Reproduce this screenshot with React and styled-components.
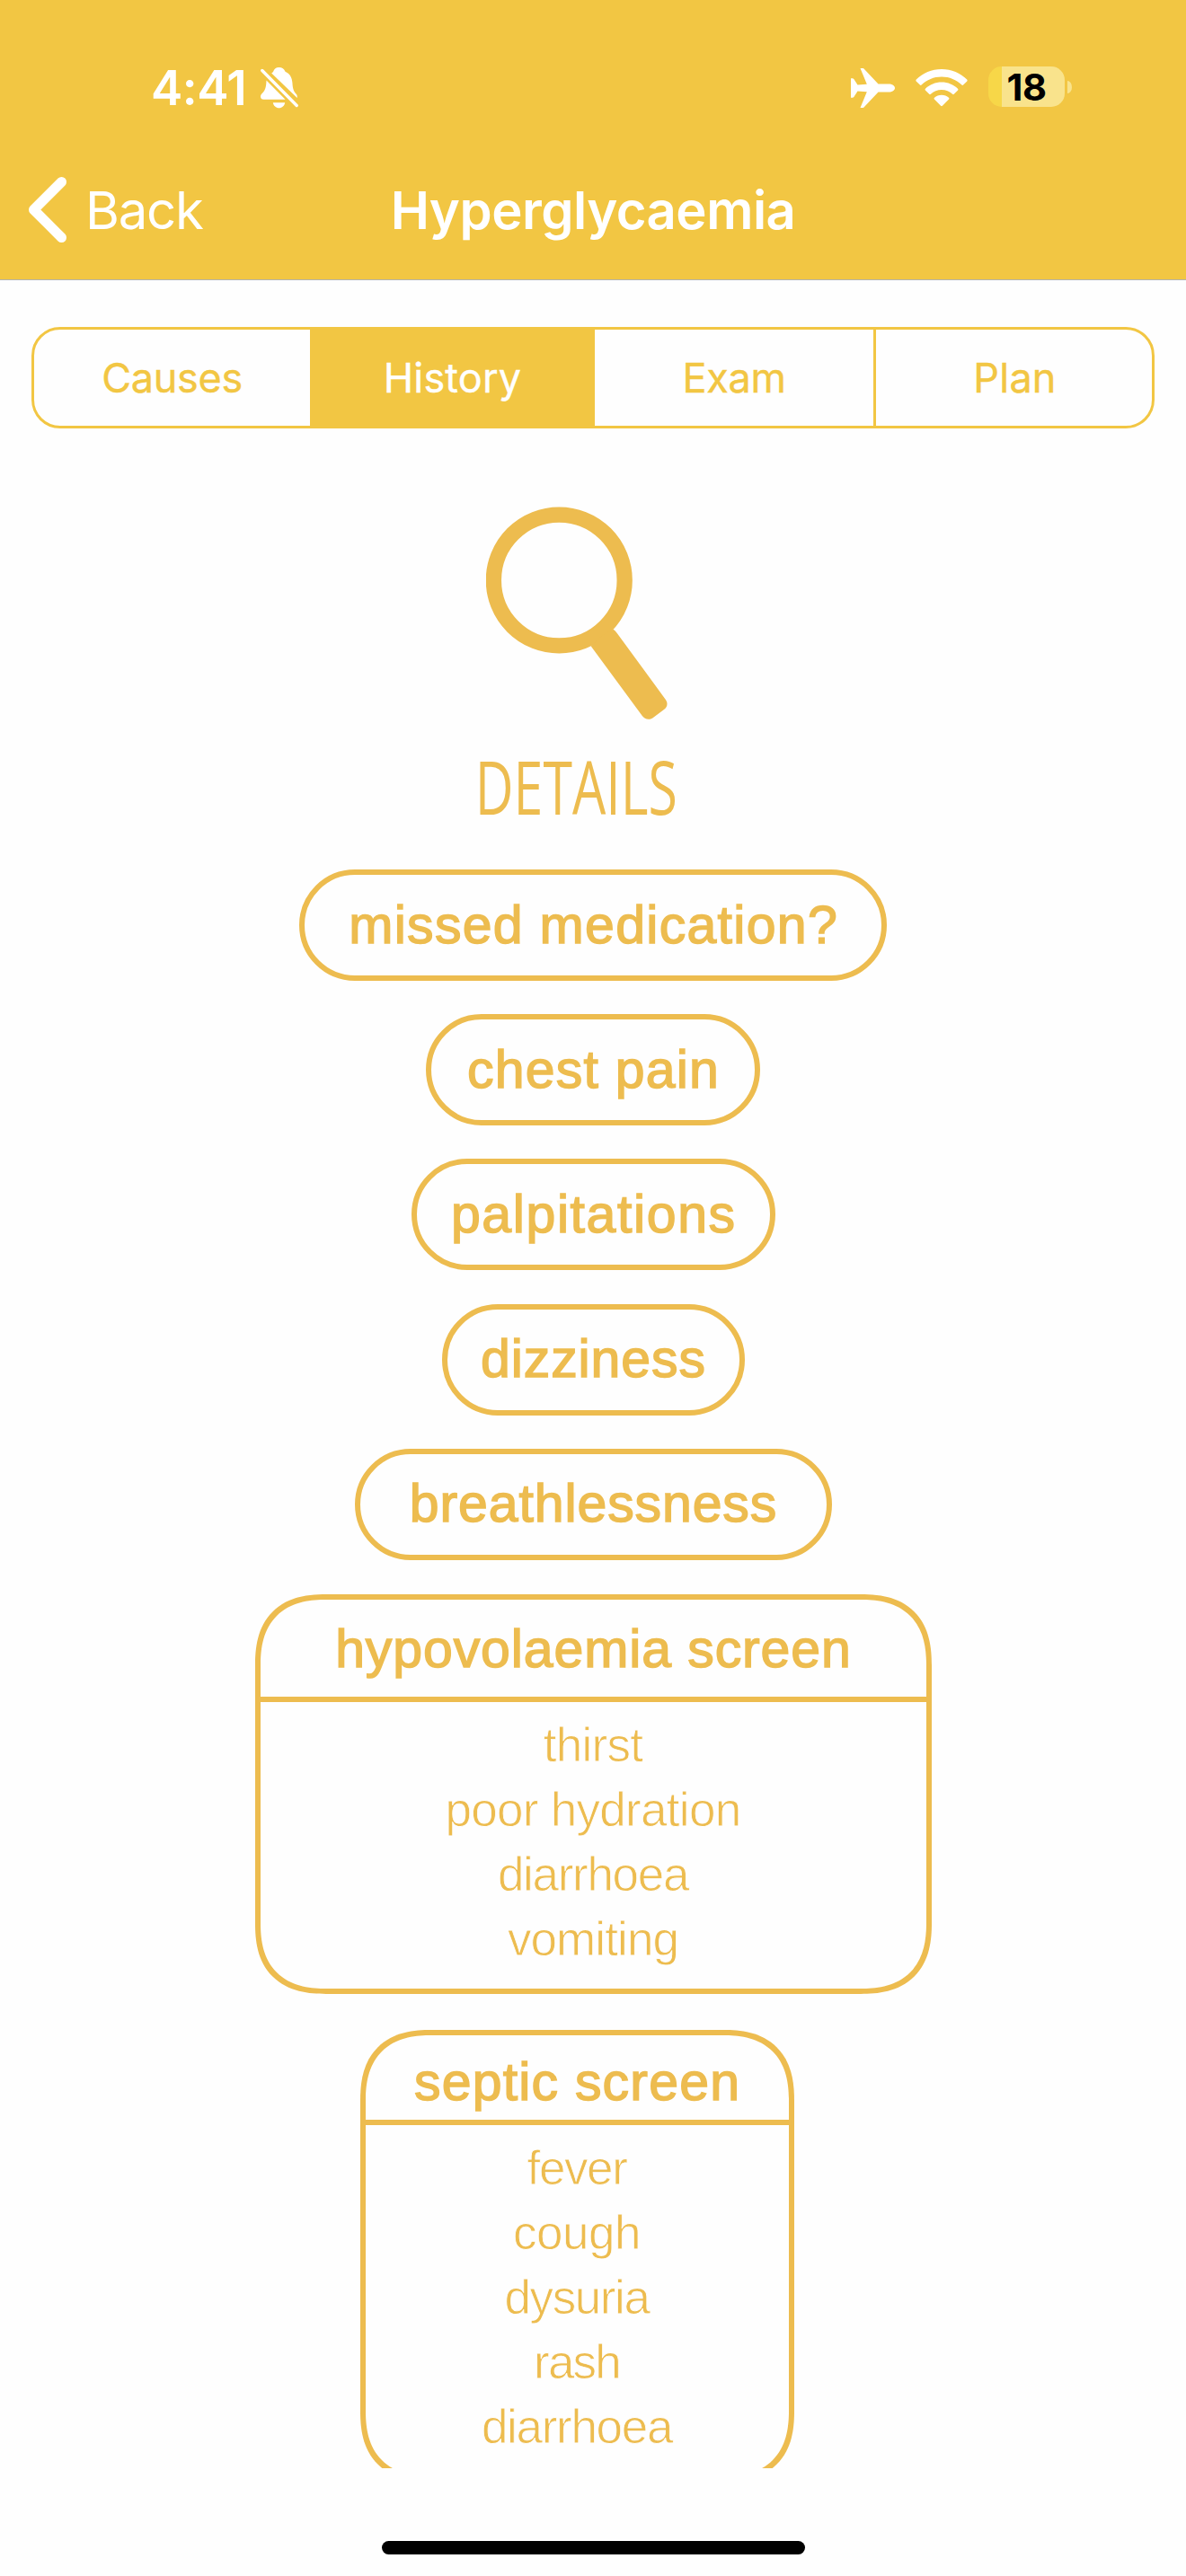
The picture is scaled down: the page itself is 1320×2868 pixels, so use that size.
import React from "react";
import styled, { createGlobalStyle } from "styled-components";

const BAR = "#f2c643";
const INK = "#edbc4f";
const PAPER = "#fefefe";

const GlobalStyle = createGlobalStyle`
  *, *::before, *::after { box-sizing: border-box; }
  html, body { margin: 0; background: ${PAPER}; }
`;

const Screen = styled.div`
  width: 1320px;
  height: 2868px;
  display: flex;
  flex-direction: column;
  background: ${PAPER};
  overflow: hidden;
  font-family: Inter, "Liberation Sans", sans-serif;
`;

const TopBar = styled.header`
  height: 312px;
  background: ${BAR};
  border-bottom: 1px solid #b3b3b0;
  color: #fff;
`;

const StatusBar = styled.div`
  height: 156px;
  padding: 40px 127px 0 168px;
  display: flex;
  align-items: center;
  justify-content: space-between;
`;

const StatusGroup = styled.div`
  display: flex;
  align-items: center;
  gap: ${(p) => p.$gap}px;
`;

const Clock = styled.span`
  width: 106px;
  font-size: 53px;
  font-weight: 600;
  line-height: 60px;
  letter-spacing: -0.5px;
`;

const Battery = styled.div`
  display: flex;
  align-items: center;
  gap: 3px;
  margin-bottom: 3px;
`;

const BatteryBody = styled.div`
  width: 85px;
  height: 45px;
  border-radius: 15px;
  background: linear-gradient(to right, #f7d748 15px, #f9e38c 15px);
  color: #000;
  font-size: 41.5px;
  font-weight: 700;
  line-height: 46px;
  text-align: center;
  letter-spacing: -0.5px;
`;

const BatteryTip = styled.div`
  width: 5px;
  height: 14px;
  border-radius: 0 5px 5px 0 / 0 7px 7px 0;
  background: #f9e38c;
`;

const NavBar = styled.nav`
  height: 155px;
  padding: 0 31px;
  display: grid;
  grid-template-columns: 1fr auto 1fr;
  align-items: center;
`;

const BackButton = styled.button`
  display: flex;
  align-items: center;
  gap: 20px;
  padding: 0;
  border: 0;
  background: none;
  color: #fff;
  font: 400 58px/70px Inter, sans-serif;
  letter-spacing: -1.2px;
`;

const Title = styled.h1`
  margin: 0;
  font-size: 58px;
  font-weight: 600;
  line-height: 70px;
  letter-spacing: -0.5px;
`;

const Segments = styled.div`
  height: 113px;
  margin: 52px 35px 0;
  display: grid;
  grid-template-columns: 307px 317px 310px 1fr;
  border: 3px solid ${BAR};
  border-radius: 32px;
  overflow: hidden;
`;

const Segment = styled.button`
  padding: 0 ${(p) => (p.$divided ? "0 0 2px" : "0")};
  border: 0;
  border-left: ${(p) => (p.$divided ? `3px solid ${BAR}` : "0")};
  background: ${(p) => (p.$active ? BAR : "transparent")};
  color: ${(p) => (p.$active ? "#fff" : BAR)};
  font: 400 45px/107px Inter, sans-serif;
  letter-spacing: ${(p) => p.$tracking}px;
  -webkit-text-stroke: 0.4px currentColor;
`;

const Content = styled.main`
  height: 2271px;
  padding-top: 87px;
  display: flex;
  flex-direction: column;
  align-items: center;
  overflow: hidden;
  color: ${INK};
  font-family: "Liberation Sans", Arial, sans-serif;
`;

const Section = styled.section`
  height: 404px;
  margin-right: 36px;
  display: flex;
  flex-direction: column;
  align-items: center;
  flex: none;
`;

const SectionName = styled.h2`
  margin: 23px 2px 0 0;
  font-family: "Open Sans", sans-serif;
  font-size: 82px;
  font-weight: 400;
  line-height: 100px;
  transform: scaleX(0.72);
`;

const Stack = styled.div`
  display: flex;
  flex-direction: column;
  align-items: center;
  gap: 37.2px;
`;

const Heading = styled.span`
  font-size: 59px;
  line-height: 66px;
  letter-spacing: ${(p) => p.$tracking}px;
  margin-right: ${(p) => -p.$tracking}px;
  -webkit-text-stroke: 1.5px ${INK};
  white-space: nowrap;
`;

const Pill = styled.div`
  width: ${(p) => p.$width}px;
  height: 124px;
  padding-bottom: 1px;
  display: flex;
  align-items: center;
  justify-content: center;
  border: 6px solid ${INK};
  border-radius: 62px;
`;

const Card = styled.article`
  width: ${(p) => p.$width}px;
  margin-right: ${(p) => p.$shift || 0}px;
  border: 6px solid ${INK};
  border-radius: 65px;

  @supports (corner-shape: superellipse(1.3)) {
    border-radius: 79px;
    corner-shape: superellipse(1.3);
  }
`;

const CardHead = styled.div`
  height: ${(p) => p.$height}px;
  padding-top: ${(p) => p.$drop}px;
  display: flex;
  align-items: center;
  justify-content: center;
  border-bottom: 6px solid ${INK};
`;

const List = styled.ul`
  margin: 0;
  padding: 12px 0 19px;
  list-style: none;
  text-align: center;
`;

const Item = styled.li`
  font-size: 53px;
  line-height: 72px;
  letter-spacing: ${(p) => p.$tracking}px;
  -webkit-text-stroke: 0.8px ${PAPER};
`;

const Cards = styled.div`
  margin-top: 38px;
  display: flex;
  flex-direction: column;
  align-items: center;
  gap: 40.500px;
`;

const HomeIndicator = styled.div`
  width: 471px;
  height: 15px;
  margin: 81px auto 0;
  border-radius: 8px;
  background: #000;
`;

const BellOff = () => (
  <svg width="42" height="46" viewBox="0 0 42 46" fill="#fff">
    <path d="M20.5 0c3.6 0 5.800 2 7 4.700 5 2.300 7.500 6.500 7.900 12.300.4 6.500 1.200 9.500 4.300 12.800.9 1 1.300 2.200 1 4.300L12.200 6.500c1.100-.8 1.600-1.300 1.900-1.800C15.200 2 17 0 20.500 0z" />
    <path d="M6.500 14.500 27.500 35.800H3.500C1.300 35.800 0 34.500 0 32.500c0-1.500.7-2.500 2.200-4 3.200-3.400 4-6.500 4.300-14z" />
    <path d="M13.800 39.200h13.400c-.6 3.500-3.300 6-6.700 6s-6.100-2.500-6.700-6z" />
    <path d="M1.800 3.500 40.200 42.500" stroke="#fff" strokeWidth="3.400" strokeLinecap="round" />
  </svg>
);

const Plane = () => (
  <svg width="49" height="44" viewBox="0 0 49 44" fill="#fff">
    <path d="M10.500 0h2.400c1 0 1.700.5 2.300 1.300L30.500 17.500H42c4 0 7 2 7 4.500s-3 4.500-7 4.500H30.500L15.200 42.700c-.6.800-1.300 1.300-2.300 1.300h-2.400l7.300-17.700-10.300-.8-4 6.300c-.4.700-1 1-1.800 1H0V11.200h1.700c.8 0 1.400.3 1.800 1l4 6.300 10.300-.8z" />
  </svg>
);

const Wifi = () => (
  <svg width="58" height="42" viewBox="0 0 58 42" fill="#fff">
    <path d="M29 0c11 0 21 4.400 28.200 11.600.6.600.6 1.200.1 1.800l-4.200 4.200c-.5.500-1.200.5-1.700 0C45.600 12 37.700 8.600 29 8.600S12.400 12 6.600 17.600c-.5.500-1.200.5-1.700 0L.7 13.400c-.5-.6-.5-1.200.1-1.800C8 4.400 18 0 29 0z" />
    <path d="M29 14.500c7 0 13.300 2.700 18 7.200.6.600.6 1.200.1 1.800l-4.300 4.300c-.5.500-1.100.5-1.700 0-3.200-3-7.400-4.800-12.100-4.800s-8.900 1.800-12.100 4.800c-.6.500-1.200.5-1.700 0l-4.300-4.300c-.5-.6-.5-1.200.1-1.800 4.700-4.500 11-7.200 18-7.200z" />
    <path d="M29 28.700c3.100 0 5.900 1.100 8 3 .6.600.6 1.200.1 1.700l-7.200 7.400c-.6.600-1.200.6-1.800 0l-7.200-7.400c-.5-.5-.5-1.100.1-1.700 2.100-1.900 4.900-3 8-3z" />
  </svg>
);

const Chevron = () => (
  <svg width="44" height="76" viewBox="0 0 44 76" fill="none">
    <path d="M37.500 6.500 6.500 37.500l31 31" stroke="#fff" strokeWidth="11" strokeLinecap="round" strokeLinejoin="round" />
  </svg>
);

const Magnifier = () => (
  <svg width="202" height="238" viewBox="0 0 202 238" fill="none">
    <circle cx="81.300" cy="82" r="72.900" stroke={INK} strokeWidth="17.300" />
    <path
      d="M116.800 155.500 173.800 233c2.600 3.800 7.800 5 11.500 2.400l13-9.700c3.600-2.600 4.200-7.200 1.600-10.800L145.800 141c-1-1.500-2.300-3-4.200-4.300L129.800 143z"
      fill={INK}
    />
  </svg>
);

const segments = [
  { label: "Causes", tracking: -0.3 },
  { label: "History", tracking: 0.2, active: true },
  { label: "Exam", tracking: -0.3 },
  { label: "Plan", tracking: 0.2, divided: true },
];

const symptoms = [
  { label: "missed medication?", width: 654, tracking: 1.3 },
  { label: "chest pain", width: 372, tracking: 1.2 },
  { label: "palpitations", width: 405, tracking: 1.6 },
  { label: "dizziness", width: 337, tracking: 0.9 },
  { label: "breathlessness", width: 531, tracking: 0.9 },
];

const screens = [
  {
    label: "hypovolaemia screen",
    width: 753,
    head: 114,
    drop: 2,
    tracking: 0.9,
    items: [["thirst", -0.7], ["poor hydration", -0.7], ["diarrhoea", -1.3], ["vomiting", -0.9]],
  },
  {
    label: "septic screen",
    width: 483,
    shift: 36,
    head: 100,
    drop: 9,
    tracking: 1.2,
    items: [["fever", -1.4], ["cough", -0.5], ["dysuria", -1.4], ["rash", -1.8], ["diarrhoea", -1.3]],
  },
];

export default function App() {
  return (
    <Screen>
      <GlobalStyle />
      <TopBar>
        <StatusBar>
          <StatusGroup $gap={16}>
            <Clock>4:41</Clock>
            <BellOff />
          </StatusGroup>
          <StatusGroup $gap={23}>
            <Plane />
            <Wifi />
            <Battery>
              <BatteryBody>18</BatteryBody>
              <BatteryTip />
            </Battery>
          </StatusGroup>
        </StatusBar>
        <NavBar>
          <BackButton>
            <Chevron />
            Back
          </BackButton>
          <Title>Hyperglycaemia</Title>
        </NavBar>
      </TopBar>

      <Segments>
        {segments.map((s) => (
          <Segment key={s.label} $active={s.active} $divided={s.divided} $tracking={s.tracking}>
            {s.label}
          </Segment>
        ))}
      </Segments>

      <Content>
        <Section>
          <Magnifier />
          <SectionName>DETAILS</SectionName>
        </Section>
        <Stack>
          {symptoms.map((s) => (
            <Pill key={s.label} $width={s.width}>
              <Heading $tracking={s.tracking}>{s.label}</Heading>
            </Pill>
          ))}
        </Stack>
        <Cards>
          {screens.map((c) => (
            <Card key={c.label} $width={c.width} $shift={c.shift}>
              <CardHead $height={c.head} $drop={c.drop}>
                <Heading $tracking={c.tracking}>{c.label}</Heading>
              </CardHead>
              <List>
                {c.items.map(([text, tracking]) => (
                  <Item key={text} $tracking={tracking}>{text}</Item>
                ))}
              </List>
            </Card>
          ))}
        </Cards>
      </Content>

      <HomeIndicator />
    </Screen>
  );
}
